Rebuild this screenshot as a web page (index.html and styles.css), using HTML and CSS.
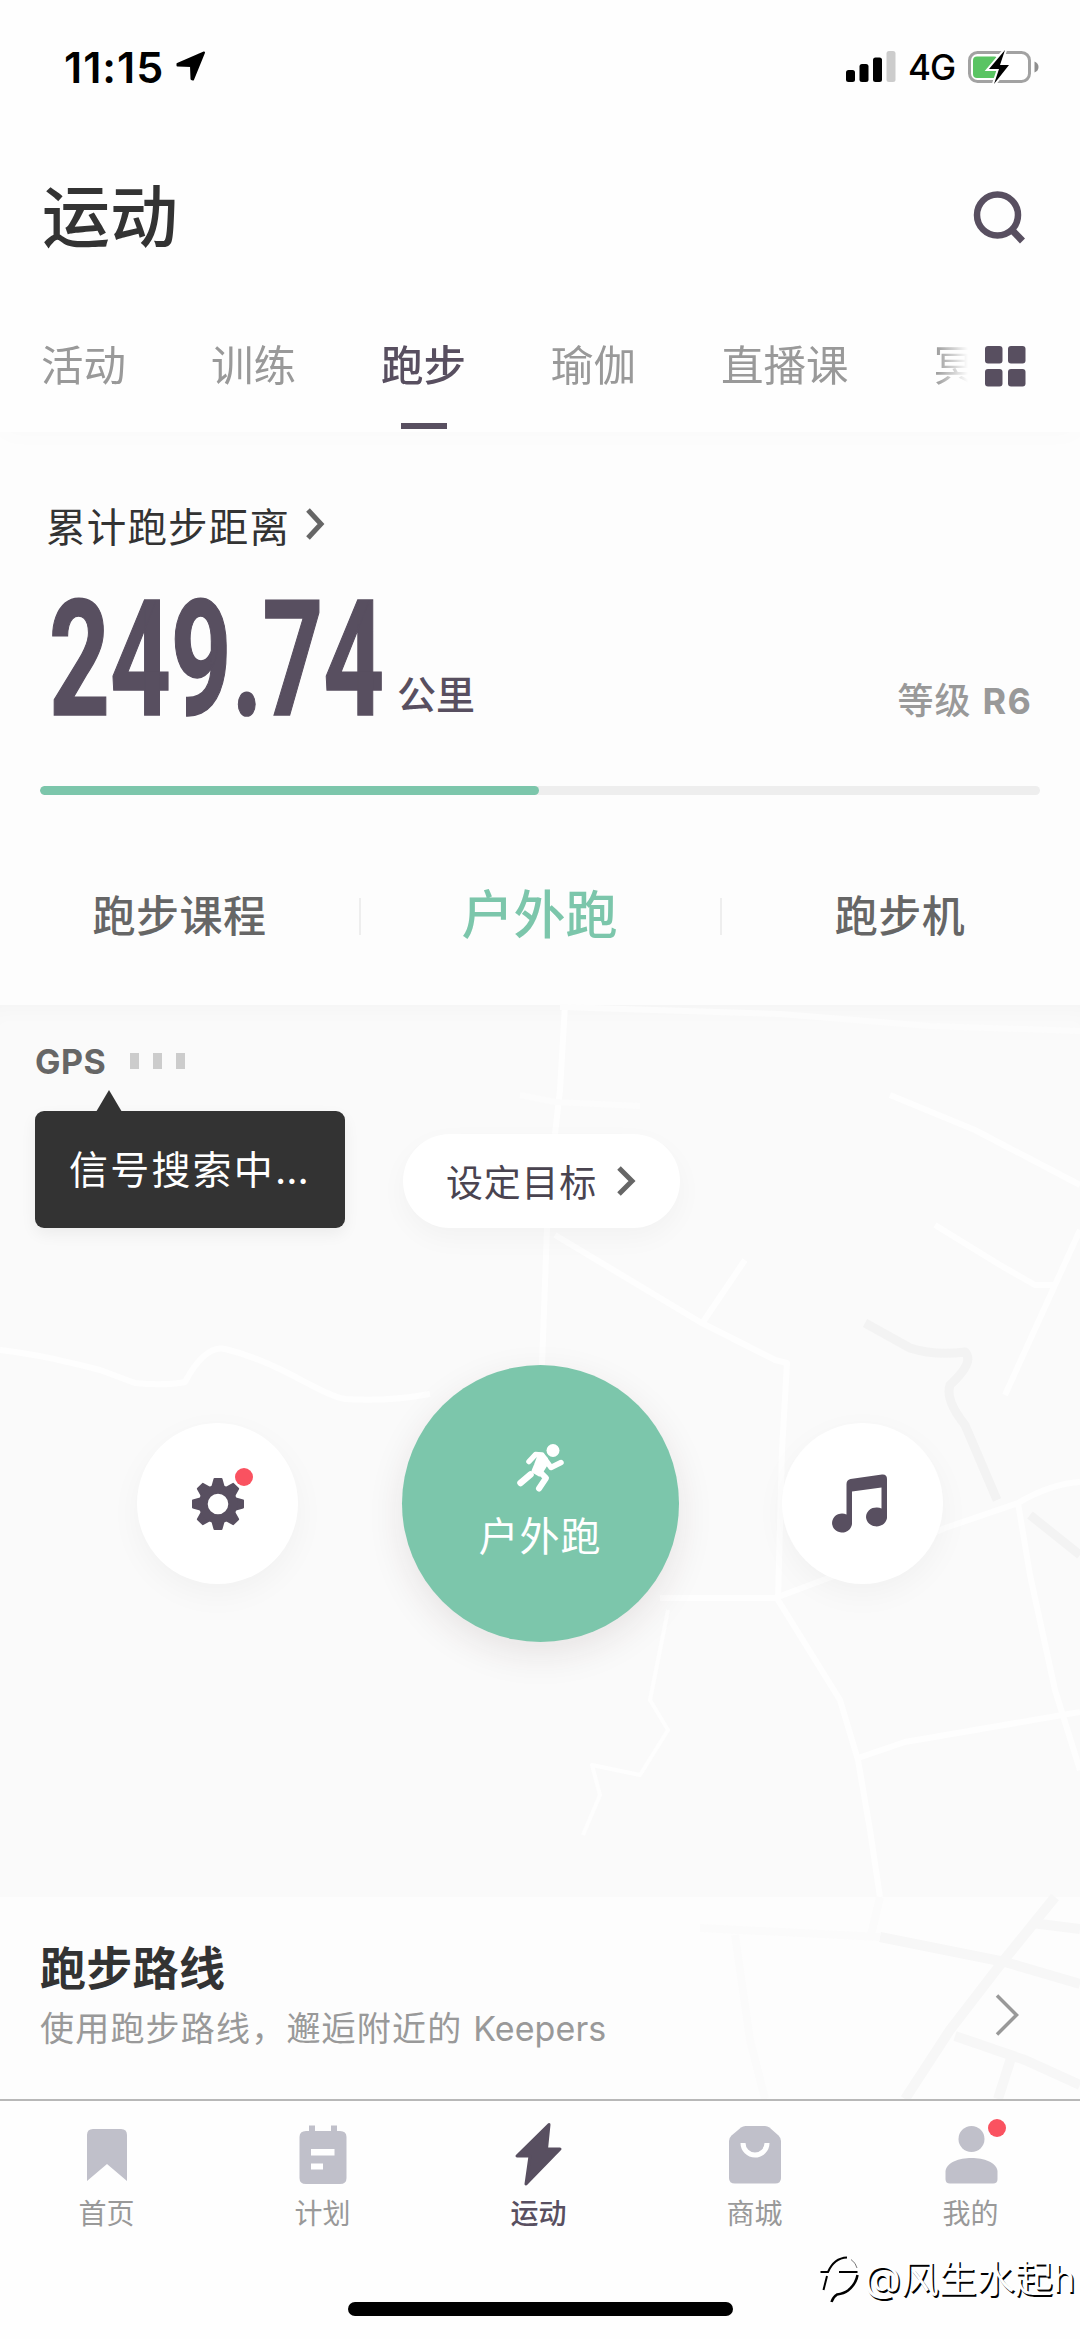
FILE: index.html
```html
<!DOCTYPE html>
<html lang="zh-CN">
<head>
<meta charset="utf-8">
<title>运动</title>
<link rel="stylesheet" href="styles.css">
</head>
<body>
<div class="screen">
  <header class="header">
    <div class="status">
      <span class="status-time">11:15</span>
      <svg class="status-arrow" width="30" height="30" viewBox="0 0 30 30"><path d="M28 1.500 17 28.500 15.500 28 15 15 1.500 14.500 1.500 13Z" fill="#000" stroke="#000" stroke-width="2" stroke-linejoin="round"/></svg>
      <svg class="status-signal" width="50" height="32" viewBox="0 0 50 32"><rect x="0" y="19" width="9" height="12" rx="2.500"/><rect x="13.500" y="13" width="9" height="18" rx="2.500"/><rect x="27" y="6.500" width="9" height="24.500" rx="2.500"/><rect x="40.500" y="0" width="9" height="31" rx="2.500" fill="#ccc"/></svg>
      <span class="status-net">4G</span>
      <svg class="status-battery" width="72" height="36" viewBox="0 0 72 36"><rect x="1.500" y="3.500" width="60" height="29" rx="8" fill="#fff" stroke="#a2a2a2" stroke-width="3"/><rect x="5" y="7.500" width="25" height="21.500" rx="4" fill="#5ac463"/><path d="M66.500 12.500q4 1.500 4 5.500t-4 5.500Z" fill="#8e8e8e"/><path d="M37 1 21 20h10l-5 15 15-19H32Z" fill="#000" stroke="#fff" stroke-width="4" paint-order="stroke"/></svg>
    </div>
    <div class="title-row">
      <h1 class="title">运动</h1>
      <svg width="54" height="54" viewBox="0 0 54 54" fill="none" stroke="#584f60"><circle cx="25.500" cy="25" r="20.500" stroke-width="6.500"/><path d="M39.500 39.500 50.500 51" stroke-width="7"/></svg>
    </div>
    <div class="tabs-row">
      <nav class="tabs">
        <a class="tab">活动</a><a class="tab">训练</a><a class="tab tab-active">跑步</a><a class="tab">瑜伽</a><a class="tab">直播课</a><a class="tab">冥</a>
      </nav>
      <svg width="41" height="41" viewBox="0 0 41 41" fill="#584f60"><rect width="17.500" height="17.500" rx="3"/><rect x="23" width="17.500" height="17.500" rx="3"/><rect y="23" width="17.500" height="17.500" rx="3"/><rect x="23" y="23" width="17.500" height="17.500" rx="3"/></svg>
    </div>
  </header>

  <section class="stats">
    <div class="stats-label">累计跑步距离
      <svg width="20" height="32" viewBox="0 0 20 32"><path d="M3 2 16 16 3 30" fill="none" stroke="#666" stroke-width="5"/></svg>
    </div>
    <div class="stats-row">
      <div class="distance"><span class="distance-value">249.74</span></div>
      <span class="distance-unit">公里</span>
      <span class="level">等级 <b>R6</b></span>
    </div>
    <div class="progress"><div class="progress-fill" style="width: 49.9%"></div></div>
    <nav class="modes">
      <a class="mode">跑步课程</a><a class="mode mode-active">户外跑</a><a class="mode">跑步机</a>
    </nav>
  </section>

  <div class="map">
    <svg class="map-art" width="1080" height="1094" viewBox="0 1005 1080 1094" fill="none" stroke-linejoin="round">
      <g stroke="#f3f3f3" stroke-width="9">
        <path d="M865 1323 910 1348Q935 1356 965 1352 975 1362 950 1385 945 1400 965 1425L997 1500M1030 1515 1080 1555"/>
      </g>
      <g stroke="#fefefe" stroke-width="6">
        <path d="M0 1350C40 1355 60 1360 100 1370L135 1383Q165 1386 185 1382 205 1345 225 1349C280 1362 320 1395 345 1399Q385 1402 430 1394"/>
        <path d="M565 1005 560 1090 555 1134M547 1228 542 1365M555 1235 700 1322 775 1360 787 1363 782 1450 778 1600 840 1700 858 1760 870 1830 880 1897M703 1322 745 1260"/>
        <path d="M660 1598H775L850 1570 945 1528 1018 1503Q1050 1484 1080 1482M1018 1503 1030 1575 1055 1690 1080 1770M858 1758 905 1742 1080 1712"/>
        <path d="M890 1095 975 1130 1080 1185M935 1225 1000 1265 1035 1285H1055L1080 1230M1055 1285 1005 1395"/>
        <path d="M560 1007 780 1014 930 1026 1080 1031M520 1095 555 1102 640 1106" stroke="#fcfcfc"/>
        <path d="M668 1610 650 1700 668 1730 640 1775 592 1765 600 1795 583 1835" stroke-width="4"/>
      </g>
      <path fill="#fdfdfd" d="M0 1897H1080V2099H0Z"/>
      <g stroke="#f7f7f7" stroke-width="10">
        <path d="M880 1937 1005 1962 1080 1984M1055 1897 1000 1965 950 2030 905 2099M1032 1923 1080 1929M955 2036 1025 2060 1080 2085M1012 2055 998 2099"/>
        <path d="M700 1928 880 1937M880 1897 871 1935M735 1935 750 2040 765 2099" stroke="#fbfbfb" stroke-width="8"/>
      </g>
    </svg>
    <section class="run">
      <div class="gps">GPS<i class="gps-bar"></i><i class="gps-bar"></i><i class="gps-bar"></i></div>
      <div class="run-top">
        <div class="tip">信号搜索中<span class="tip-dots">...</span></div>
        <button class="goal">设定目标<svg width="20" height="30" viewBox="0 0 20 30"><path d="M3 2 16 15 3 28" fill="none" stroke="#666" stroke-width="5"/></svg></button>
      </div>
      <div class="controls">
        <button class="round">
          <svg width="54" height="54" viewBox="-27 -27 54 54" fill="#584f60">
            <g id="teeth"><path id="tooth" d="M-3.500-25H3.500L6-16H-6Z" stroke="#584f60" stroke-width="2" stroke-linejoin="round"/><use href="#tooth" transform="rotate(45)"/><use href="#tooth" transform="rotate(90)"/><use href="#tooth" transform="rotate(135)"/></g>
            <use href="#teeth" transform="rotate(180)"/>
            <circle r="14.800" fill="none" stroke="#584f60" stroke-width="9"/>
          </svg>
          <i class="dot gear-dot"></i>
        </button>
        <button class="start">
          <svg width="50" height="50" viewBox="0 0 50 50" fill="none" stroke="#fff" stroke-linecap="round" stroke-linejoin="round"><circle cx="38" cy="7.500" r="6.500" fill="#fff" stroke="none"/><path d="M14 18.500 20.500 11.500 27 12 36 24.500 46 19.500" stroke-width="5.500"/><path d="M26.500 12 31 16 31 21 24.500 31.500 18.500 28 21 22 24 14Z" fill="#fff" stroke-width="4"/><path d="M24 28 31 35 24 45.500" stroke-width="6"/><path d="M15.500 31.500 5.500 40" stroke-width="6.500"/></svg>
          <span>户外跑</span>
        </button>
        <button class="round">
          <svg class="note" width="56" height="58" viewBox="0 0 56 58" fill="#584f60"><path d="M14.500 10Q14.500 6 18.500 5L50 .5Q55 0 55 5V42A10.500 9.500 0 1 1 49.500 34.500V13.500L20 17.500V48A10 9.500 0 1 1 14.500 40.500Z"/></svg>
        </button>
      </div>
    </section>
    <section class="route">
      <div>
        <h2 class="route-title">跑步路线</h2>
        <p class="route-sub">使用跑步路线，邂逅附近的 <span class="latin">Keepers</span></p>
      </div>
      <svg width="24" height="42" viewBox="0 0 24 42"><path d="M2 1.500 21.500 21 2 40.500" fill="none" stroke="#999" stroke-width="3.500"/></svg>
    </section>
  </div>

  <nav class="tabbar">
    <a class="item"><svg width="64" height="64" viewBox="0 0 64 64" fill="#c0c0ca"><path d="M12 13Q12 7 18 7H46Q52 7 52 13V59L32 42 12 59Z"/></svg>首页</a>
    <a class="item"><svg width="64" height="64" viewBox="0 0 64 64" fill="#c0c0ca"><path d="M18 3.500h6V9H40V3.500h6V9h3Q55.500 9 55.500 15V56Q55.500 62 49 62H15Q8.500 62 8.500 56V15Q8.500 9 15 9h3Z"/><path d="M20 27H43.500v6.500H20ZM20 41.500H32v6H20Z" fill="#fff"/></svg>计划</a>
    <a class="item item-active"><svg width="64" height="64" viewBox="0 0 64 64" fill="#584f60"><path d="M42 2.500 10 34H23L19 62 53 27H39.500Z" stroke="#584f60" stroke-width="3" stroke-linejoin="round"/></svg>运动</a>
    <a class="item"><svg width="64" height="64" viewBox="0 0 64 64"><path d="M18 5.500Q20 4 22.500 4H42Q44.500 4 46.500 5.500L55.500 13.500Q58 16 58 19V56Q58 61.500 52 61.500H12Q6 61.500 6 56V19Q6 16 8.500 13.500Z" fill="#c0c0ca"/><path d="M20 21A12 12 0 0 0 44 21" fill="none" stroke="#fff" stroke-width="5"/></svg>商城</a>
    <a class="item"><svg width="64" height="64" viewBox="0 0 64 64" fill="#c0c0ca"><circle cx="32.500" cy="17" r="13"/><path d="M6.500 49C8 40 20 36 32.500 36S57 40 58.500 49V57Q58.500 61.500 54 61.500H11Q6.500 61.500 6.500 57Z"/></svg>我的<i class="dot mine-dot"></i></a>
  </nav>
  <div class="home-bar"></div>
  <div class="watermark">
    <svg width="42" height="52" viewBox="0 0 42 52" fill="none" stroke="#000"><path d="M1.500 19V18H8Q14 4 27 3.500M19 18H37.500M7 22 3.500 36" stroke-width="2"/><path d="M37.500 21Q36 30 28 36.500 24 39.500 17 40.500 13 43 11.500 48" stroke-width="2.500"/><path d="M31 5.500Q36 9 37 14" stroke="#777" stroke-width="1"/></svg>
    <span>@风生水起h</span>
  </div>
</div>
</body>
</html>
```
FILE: styles.css
```css
* { box-sizing: border-box; margin: 0; padding: 0; }
body { background: #fdfdfd; font-family: Inter, "Noto Sans CJK SC", sans-serif; color: #333; }
svg { display: block; flex: none; overflow: visible; }
button { border: 0; font: inherit; background: #fff; }
.screen { position: relative; width: 1080px; height: 2339px; overflow: hidden; display: flex; flex-direction: column; }

/* Header */
.header { position: relative; height: 432px; background: #fefefe; box-shadow: 0 4px 24px rgba(0, 0, 0, .015); }
.status { height: 134px; padding: 0 40px 0 64px; display: flex; align-items: center; color: #000; }
.status-time { font-size: 43px; font-weight: 600; width: 112px; letter-spacing: 1px; white-space: nowrap; }
.status-arrow { margin-top: -2px; }
.status-signal { margin-left: auto; }
.status-net { font-size: 35px; font-weight: 500; margin: 0 13px 0 12px; width: 47px; letter-spacing: -1px; white-space: nowrap; }
.title-row { height: 166px; padding: 0 54px 0 42px; display: flex; align-items: center; justify-content: space-between; }
.title { font-size: 68px; font-weight: 500; line-height: 166px; }
.tabs-row { height: 132px; display: flex; align-items: center; padding: 0 54px 0 41px; justify-content: space-between; }
.tabs { display: flex; gap: 85px; width: 940px; white-space: nowrap; -webkit-mask-image: linear-gradient(90deg, #000 894px, transparent 927px); mask-image: linear-gradient(90deg, #000 894px, transparent 927px); }
.tab { position: relative; flex: none; font-size: 42.500px; line-height: 134px; color: #999; }
.tab-active { color: #584f60; font-weight: 500; }
.tab-active::after { content: ""; position: absolute; left: 20px; bottom: 4px; width: 46px; height: 6px; background: #584f60; }

/* Distance summary */
.stats { height: 573px; padding: 62px 40px 0; }
.stats-label { display: flex; align-items: center; gap: 15px; height: 60px; padding-left: 6px; font-size: 39.500px; letter-spacing: 1.200px; }
.stats-row { display: flex; height: 232px; padding: 44px 8px 0 9px; }
.distance { width: 348px; height: 116px; }
.distance-value { display: block; width: 500px; font: 700 162px/124px Roboto, sans-serif; color: #584f60; -webkit-text-stroke: 1.500px #584f60; transform: scaleX(.655); transform-origin: 0 50%; }
.distance-unit { font-size: 39px; font-weight: 500; line-height: 194px; color: #584f60; }
.level { margin-left: auto; font-size: 36px; font-weight: 500; line-height: 206px; color: #999; letter-spacing: 1.200px; }
.progress { height: 9px; border-radius: 5px; background: #eee; overflow: hidden; }
.progress-fill { height: 9px; border-radius: 5px; background: #7cc6ab; }
.modes { height: 210px; margin: 0 -40px; padding-top: 31px; display: grid; grid-template-columns: 359px 361px 360px; align-items: center; }
.mode { position: relative; text-align: center; font-size: 43px; font-weight: 500; line-height: 60px; color: #666; letter-spacing: .5px; }
.mode + .mode::before { content: ""; position: absolute; left: 0; top: 12px; width: 2px; height: 37px; background: #eee; }
.mode-active { font-size: 52px; color: #7cc6ab; letter-spacing: 0; }

/* Map */
.map { position: relative; height: 1094px; background: #fafafa; box-shadow: inset 0 18px 20px -12px rgba(0, 0, 0, .025); }
.map-art { position: absolute; left: 0; top: 0; }
.run { position: relative; height: 892px; padding-top: 35px; }
.gps { display: flex; align-items: center; height: 42px; padding-left: 35px; font-size: 34px; font-weight: 700; letter-spacing: .5px; color: #666; }
.gps-bar { width: 9px; height: 16px; margin-left: 14px; background: #ccc; }
.gps-bar:first-of-type { margin-left: 24px; }
.run-top { display: flex; padding: 29px 0 0 35px; gap: 58px; align-items: flex-end; }
.tip { position: relative; width: 310px; height: 117px; padding-left: 34px; border-radius: 9px; background: #333; color: #fff; font-size: 39px; line-height: 117px; letter-spacing: 2.200px; white-space: nowrap; box-shadow: 0 6px 16px rgba(0, 0, 0, .06); }
.tip-dots { letter-spacing: 0; }
.tip::before { content: ""; position: absolute; left: 61px; top: -21px; border: solid transparent; border-width: 0 13.500px 22px; border-bottom-color: #333; }
.goal { width: 277px; height: 94px; border-radius: 47px; display: flex; align-items: center; justify-content: center; gap: 19px; padding-right: 1px; font-size: 37px; color: #4a4450; letter-spacing: .8px; box-shadow: 0 10px 28px rgba(0, 0, 0, .035); }
.controls { display: flex; align-items: center; justify-content: space-between; padding: 137px 137px 0; }
.round { position: relative; width: 161px; height: 161px; border-radius: 50%; display: grid; place-items: center; box-shadow: 0 10px 32px rgba(0, 0, 0, .04); }
.note { margin: 0 5px 2px 0; }
.start { width: 277px; height: 277px; border-radius: 50%; background: #7cc6ab; color: #fff; display: flex; flex-direction: column; align-items: center; padding-top: 78px; gap: 21px; font-size: 40px; line-height: 46px; letter-spacing: 1px; box-shadow: 0 12px 36px rgba(60, 30, 30, .1); }
.dot { position: absolute; width: 18px; height: 18px; border-radius: 50%; background: #fa5260; }
.gear-dot { left: 98px; top: 45px; }

/* Route card */
.route { position: relative; height: 202px; padding: 33px 61px 0 40px; display: flex; align-items: center; justify-content: space-between; }
.route > div { align-self: flex-start; }
.route-title { font-size: 46px; font-weight: 600; line-height: 76px; color: #333; letter-spacing: .3px; }
.route-sub { font-size: 34px; line-height: 46px; color: #999; letter-spacing: 1.200px; }
.latin { letter-spacing: .1px; }

/* Bottom bar */
.tabbar { position: relative; height: 240px; border-top: 2px solid #b8b8b8; display: flex; background: #fefefe; }
.item { position: relative; width: 216px; padding-top: 21px; padding-right: 3px; display: flex; flex-direction: column; align-items: center; gap: 6px; font-size: 28px; line-height: 44px; color: #999; }
.item-active { color: #584f60; font-weight: 500; }
.mine-dot { left: 124px; top: 18px; }
.home-bar { position: absolute; left: 348px; top: 2302px; width: 385px; height: 14px; border-radius: 7px; background: #000; }
.watermark { position: absolute; left: 820px; top: 2254px; display: flex; align-items: center; gap: 2px; font-size: 38px; line-height: 48px; color: #fff; text-shadow: 1.500px 1.500px 0 #000; white-space: nowrap; }
.watermark span { position: relative; top: -2px; }
```
